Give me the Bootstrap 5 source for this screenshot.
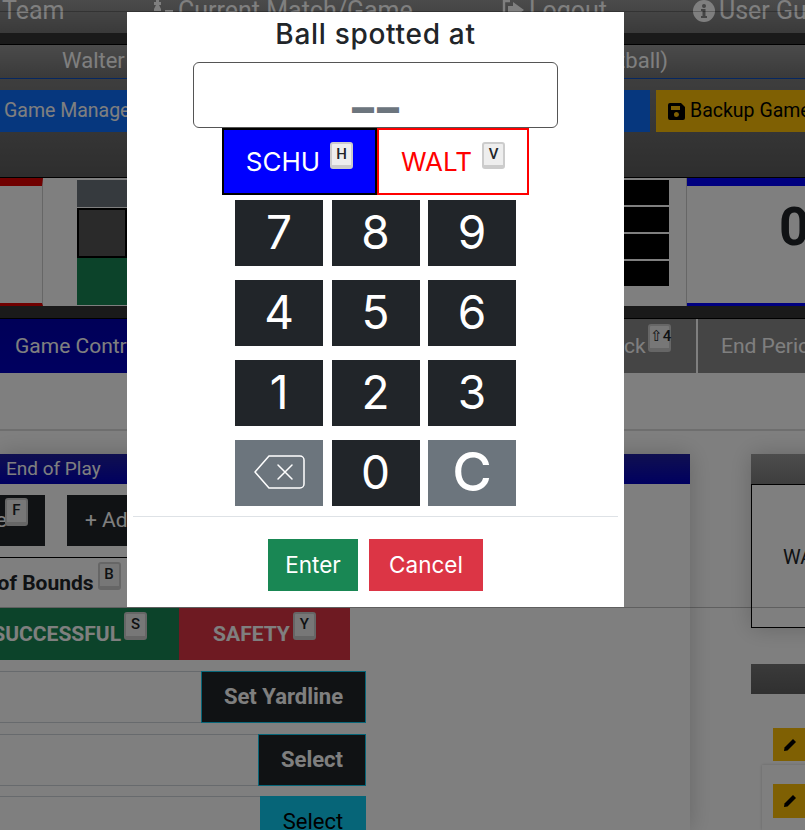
<!doctype html>
<html lang="en"><head><meta charset="utf-8"><title>Ball spotted</title>
<link href="https://cdn.jsdelivr.net/npm/bootstrap@5.3.0/dist/css/bootstrap.min.css" rel="stylesheet">
<style>
html,body{height:830px;overflow:hidden}
body{font-family:Roboto,sans-serif;background:#fff;color:#212529;width:805px}
.stage{width:805px;height:830px;overflow:hidden}
.topbar{height:33px;background:linear-gradient(#969696,#747474);color:#fff;font-size:25px;white-space:nowrap;overflow:hidden}
.topitem{flex:none;display:flex;align-items:center;gap:4px;height:22px}
.t1{width:150px;padding-left:2px}.t2{width:351px}.t3{width:192px}
.strip{height:12px;background:#343434;border-bottom:1px solid #000}
.titlewrap{background:linear-gradient(#969696,#747474);border-bottom:1px solid #0d4fc0;height:34px}
.titlerow{font-size:22px;line-height:32px;width:668px;padding-left:62px}
.toolband{height:99px;background:linear-gradient(#7c7c7c,#5c5c5c);padding-top:11px;border-bottom:1px solid #000}
.tb{height:42px;font-size:19.5px;line-height:42px;white-space:nowrap;overflow:hidden;flex:none}
.tb-blue{width:650px;background:#0d6efd;color:#fff;padding-left:4px}
.tb-yellow{margin-left:6px;width:200px;background:#ffc107;color:#000;padding-left:12px;display:flex;align-items:center;gap:5px}
.score{height:128px;background:#fff}
.sq-red{width:43px;border-top:8px solid #e00000;border-bottom:3px solid #e00000;border-right:1px solid #ccc}
.sq-gap{width:34px}
.sq-mid{width:50px;flex:none;padding-top:2px}
.m1{height:27px;background:#6c757d;margin-bottom:1px}
.m2{height:50px;background:#555;border:2px solid #000}
.m3{height:47px;background:#198754}
.sq-fill{width:497px;flex:none}
.sq-lamps{width:45px;flex:none;display:flex;flex-direction:column;gap:2px;padding-top:2px}
.sq-lamps div{height:25px;background:#000}
.sq-gap2{width:18px;flex:none;border-right:1px solid #ccc}
.sq-team{flex:1;border-top:8px solid #0000ff;border-bottom:3px solid #0000ff;font-size:53px;font-weight:700;padding-left:92px;line-height:82px}
.strip2{height:13px;background:#343434;border-bottom:1px solid #000}
.tabs{height:54px}
.tabn{font-size:21px;line-height:54px;color:#fff;white-space:nowrap;overflow:hidden;flex:none}
.tab1{width:624px;background:linear-gradient(#0000b0,#0000c0);padding-left:15px}
.tab2{width:72px;background:#8a8a8a;padding-left:0}
.tab3{width:107px;margin-left:2px;background:#8a8a8a;padding-left:23px}
.tabkey{width:24px;height:28px;margin-top:5px;margin-left:2px;line-height:22px;font-size:14px}
.band{height:58px;border-bottom:2px solid #ddd;background:#fff}
.mainrow{padding-top:23px}
.leftcol{width:690px;height:376px;flex:none;box-shadow:0 0 22px rgba(0,0,0,.2);overflow:hidden}
.cardhead{height:30px;background:linear-gradient(#2020a0,#0000c0);color:#fff;font-size:19px;line-height:30px;padding-left:6px}
.actrow{height:51px;margin-top:11px;gap:22px}
.darkbtn{height:51px;background:#212529;color:#fff;font-size:21px;line-height:51px;white-space:nowrap;overflow:hidden;flex:none;display:flex;justify-content:flex-end}
.db1{width:45px}.db2{width:200px;justify-content:flex-start;padding-left:18px}
.tabf{margin:3px 17px 0 -2px;height:28px}
.outline{margin-top:11px;width:366px;height:51px;border-top:1px solid #000;font-size:21px;font-weight:700;white-space:nowrap;display:flex;justify-content:flex-start;overflow:hidden}
.outinner{margin-left:-41px;line-height:50px;display:flex;align-items:flex-start}
.tabb{margin:4px 0 0 4px;font-size:15px}
.results{height:52px}
.rs{height:52px;font-size:21px;font-weight:700;color:#fff;line-height:52px;white-space:nowrap;overflow:hidden;display:flex;justify-content:center;flex:none}
.rs1{width:179px;background:#198754;justify-content:flex-end;padding-right:32px}
.rs2{width:171px;background:#dc3545}
.tabs2{margin:4px 0 0 3px}
.field{width:366px;height:52px;margin-top:11px}
.fieldlast{margin-top:10px}
.fieldin{flex:1;border-top:1px solid #ced4da;border-bottom:1px solid #ced4da;background:#fff}
.fieldbtn{border:1px solid #0dcaf0;background:#212529;color:#fff;font-size:22px;font-weight:700;text-align:center;line-height:49px;flex:none}
.fb1{width:165px}.fb2{width:108px}
.fb3{width:106px;background:#0dcaf0;color:#000;font-weight:400;line-height:50px}
.sidecol{margin-left:61px;width:200px;flex:none}
.sidecard{box-shadow:0 0 22px rgba(0,0,0,.2)}
.sh1{height:30px;background:linear-gradient(#9a9a9a,#7c7c7c)}
.sb1{height:144px;border:1px solid #000;border-right:0;font-size:20px;display:flex;align-items:center;padding-left:31px;padding-top:2px}
.sh2{height:30px;background:linear-gradient(#757575,#606060);margin-top:36px}
.pencilbtn{width:40px;background:#ffc107;margin-left:22px;display:flex;align-items:center;padding-left:10px}
.pb1{height:33px;margin-top:34px}
.inset{margin-left:11px;margin-top:4px;background:#fff;box-shadow:0 0 3px rgba(0,0,0,.2);padding-top:19px;height:65px}
.pb2{height:34px;margin-left:11px}
.keyk{display:inline-block;width:23px;height:28px;background:#eee;border:2px solid #ccc;border-bottom-width:4px;border-radius:3px;font-size:15px;font-weight:500;line-height:21px;text-align:center;color:#212529;font-family:Roboto,sans-serif;flex:none}
.veil{position:fixed;inset:0;background:rgba(0,0,0,.5);z-index:1050}
.modal.sheet{display:block;overflow:hidden}
.sheetdialog{margin:11px 0 0;max-width:none;width:805px;border-top:1px solid rgba(0,0,0,.25);border-bottom:1px solid rgba(0,0,0,.25)}
.sheetbox{margin-left:127px;width:497px;height:595px;border:0;border-radius:0;font-family:Inter,sans-serif;color:#212529;padding:0}
.ttl{font-size:28px;letter-spacing:.7px;line-height:34px;text-align:center;padding-top:5px;height:50px;font-weight:500;margin:0}
.display{margin-left:66px;width:365px;height:66px;border:1px solid #555;border-radius:6px;display:flex;justify-content:center;align-items:flex-end;gap:5px;font-family:"DejaVu Sans",sans-serif;color:#6c757d;font-size:40px;font-weight:700;line-height:40px;padding-bottom:19px;-webkit-text-stroke:2px #6c757d}
.teams{margin-left:95px;height:67px}
.team{height:67px;font-size:26px;display:flex;justify-content:center;align-items:center;gap:10px;flex:none}
.team b{font-weight:400}
.teamH{width:155px;background:#0000ff;color:#fff;border:2px solid #000}
.teamV{width:152px;background:#fff;color:#f00;border:2px solid #f00}
.team .keyk{margin-top:-13px;height:27px;line-height:20px;width:23px}
.pad{margin-left:108px;width:281px;display:grid;grid-template-columns:88px 88px 88px;column-gap:8.5px;row-gap:14px;margin-top:5px}
.padkey{height:66px;background:#212529;color:#fff;font-size:46px;display:flex;align-items:center;justify-content:center;line-height:1;border:0;border-radius:0;padding:0 0 2px}
.padgray{background:#6c757d}
.padc{font-size:54px;font-weight:500}
.rule{margin:10px 6px 0;border-top:1px solid #dee2e6;height:23px}
.foot{gap:11px;margin-left:141px}
.fbtn{height:52px;border-radius:0;border:0;color:#fff;font-size:22.500px;padding:0;font-family:Inter,sans-serif}
.fe{width:90px;background:#198754}.fc{width:114px;background:#dc3545}
</style></head>
<body>
<div class="stage">
  <div class="topbar d-flex">
    <div class="topitem t1">Team</div>
    <div class="topitem t2"><svg width="24" height="24" viewBox="0 0 24 24" fill="#fff"><path d="M6 0h3v3h2v3H9l2 4v2H4v-2l2-4H4V3h2zM3 14h9v5H3zM15 11h8v4h-8z"/></svg>Current Match/Game</div>
    <div class="topitem t3"><svg width="24" height="24" viewBox="0 0 24 24" fill="none" stroke="#fff" stroke-width="2.400"><path d="M9 2H3v15h6"/><path fill="#fff" stroke="none" d="M12 3l11 8-11 8v-4H7V7h5z"/></svg>Logout</div>
    <div class="topitem"><svg width="22" height="22" viewBox="0 0 22 22"><circle cx="11" cy="11" r="11" fill="#fff"/><circle cx="11" cy="6" r="2" fill="#8a8a8a"/><path d="M8 9h4.500v7H14v2H8v-2h1.500v-5H8z" fill="#8a8a8a"/></svg>User Guide</div>
  </div>
  <div class="strip"></div>
  <div class="titlewrap"><div class="d-flex justify-content-between text-white titlerow"><span>Walter</span><span>(Football)</span></div></div>
  <div class="toolband d-flex">
    <div class="tb tb-blue">Game Management</div>
    <div class="tb tb-yellow"><svg width="17" height="17" viewBox="0 0 17 17"><path fill-rule="evenodd" d="M2 0h11l4 4v11a2 2 0 0 1-2 2H2a2 2 0 0 1-2-2V2a2 2 0 0 1 2-2zM3 3v4h9V3zM8.500 9a2.500 2.500 0 1 0 0 5 2.500 2.500 0 0 0 0-5z"/></svg>Backup Game</div>
  </div>
  <div class="score d-flex">
    <div class="sq-red flex-shrink-0"></div><div class="sq-gap flex-shrink-0"></div>
    <div class="sq-mid"><div class="m1"></div><div class="m2"></div><div class="m3"></div></div>
    <div class="sq-fill"></div>
    <div class="sq-lamps"><div></div><div></div><div></div><div></div></div>
    <div class="sq-gap2"></div>
    <div class="sq-team">0</div>
  </div>
  <div class="strip2"></div>
  <div class="tabs d-flex">
    <div class="tabn tab1">Game Control</div>
    <div class="tabn tab2 d-flex align-items-start">ck<span class="keyk tabkey">⇧4</span></div>
    <div class="tabn tab3">End Period</div>
  </div>
  <div class="band"></div>
  <div class="mainrow d-flex">
    <div class="leftcol">
      <div class="cardhead">End of Play</div>
      <div class="actrow d-flex">
        <div class="darkbtn db1"><span>Save</span><span class="keyk tabf">F</span></div>
        <div class="darkbtn db2">+ Add Player</div>
      </div>
      <div class="outline"><div class="outinner">Out of Bounds<span class="keyk tabb">B</span></div></div>
      <div class="results d-flex">
        <div class="rs rs1"><span>SUCCESSFUL</span><span class="keyk tabs2">S</span></div>
        <div class="rs rs2"><span>SAFETY</span><span class="keyk tabs2">Y</span></div>
      </div>
      <div class="field d-flex"><div class="fieldin"></div><div class="fieldbtn fb1">Set Yardline</div></div>
      <div class="field d-flex"><div class="fieldin"></div><div class="fieldbtn fb2">Select</div></div>
      <div class="field fieldlast d-flex"><div class="fieldin"></div><div class="fieldbtn fb3">Select</div></div>
    </div>
    <div class="sidecol">
      <div class="sidecard"><div class="sh1"></div><div class="sb1">WALT</div></div>
      <div class="sh2"></div>
      <div class="pencilbtn pb1"><svg width="14" height="14" viewBox="0 0 14 14"><path d="M10 1l3 3-8.500 8.500L1 13l.5-3.500z"/></svg></div>
      <div class="inset"><div class="pencilbtn pb2"><svg width="14" height="14" viewBox="0 0 14 14"><path d="M10 1l3 3-8.500 8.500L1 13l.5-3.500z"/></svg></div></div>
    </div>
  </div>
</div>

<div class="veil"></div>
<div class="modal sheet">
  <div class="modal-dialog sheetdialog">
    <div class="modal-content sheetbox">
      <h5 class="ttl">Ball spotted at</h5>
      <div class="display"><span>_</span><span>_</span></div>
      <div class="teams d-flex">
        <div class="team teamH"><b>SCHU</b><span class="keyk">H</span></div>
        <div class="team teamV"><b>WALT</b><span class="keyk">V</span></div>
      </div>
      <div class="pad">
        <button class="padkey">7</button><button class="padkey">8</button><button class="padkey">9</button>
        <button class="padkey">4</button><button class="padkey">5</button><button class="padkey">6</button>
        <button class="padkey">1</button><button class="padkey">2</button><button class="padkey">3</button>
        <button class="padkey padgray" aria-label="Backspace"><svg width="51" height="34" viewBox="0 0 51 34" fill="none" stroke="#fff" stroke-width="1.500" stroke-linejoin="round"><path d="M15 1h31a4 4 0 0 1 4 4v24a4 4 0 0 1-4 4H15L1 17z"/><path d="M24 10l14 14M38 10L24 24" stroke-linecap="round"/></svg></button>
        <button class="padkey">0</button>
        <button class="padkey padgray padc">C</button>
      </div>
      <div class="rule"></div>
      <div class="foot d-flex">
        <button class="btn fbtn fe">Enter</button>
        <button class="btn fbtn fc">Cancel</button>
      </div>
    </div>
  </div>
</div>
<script src="https://cdn.jsdelivr.net/npm/bootstrap@5.3.0/dist/js/bootstrap.bundle.min.js"></script>
</body></html>
